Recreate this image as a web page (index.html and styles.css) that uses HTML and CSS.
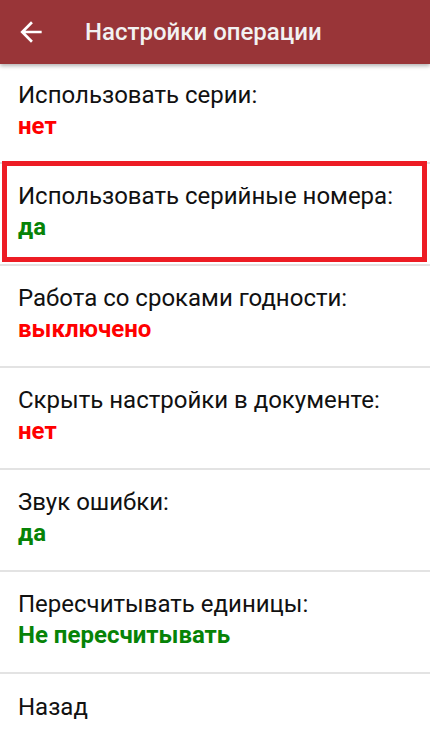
FILE: index.html
```html
<!DOCTYPE html>
<html lang="ru">
<head>
<meta charset="utf-8">
<title>Настройки операции</title>
<link rel="stylesheet" href="styles.css">
</head>
<body>
<header class="toolbar">
  <svg class="back" viewBox="0 0 24 24" width="32" height="32"><path fill="#fff" d="M20 11H7.83l5.59-5.59L12 4l-8 8 8 8 1.41-1.41L7.83 13H20v-2z"/></svg>
  <h1 class="title">Настройки операции</h1>
</header>
<main class="list">
  <div class="item">
    <div class="label">Использовать серии:</div>
    <div class="value red">нет</div>
  </div>
  <div class="item highlighted">
    <div class="label">Использовать серийные номера:</div>
    <div class="value green">да</div>
  </div>
  <div class="item">
    <div class="label">Работа со сроками годности:</div>
    <div class="value red">выключено</div>
  </div>
  <div class="item">
    <div class="label">Скрыть настройки в документе:</div>
    <div class="value red">нет</div>
  </div>
  <div class="item">
    <div class="label">Звук ошибки:</div>
    <div class="value green">да</div>
  </div>
  <div class="item">
    <div class="label">Пересчитывать единицы:</div>
    <div class="value green">Не пересчитывать</div>
  </div>
  <div class="item last">
    <div class="label">Назад</div>
  </div>
</main>
</body>
</html>
```
FILE: styles.css
```css
html, body {
  margin: 0;
  padding: 0;
  background: #fff;
}
body {
  font-family: Roboto, "Noto Sans", sans-serif;
  width: 430px;
  height: 738px;
  overflow: hidden;
}
.toolbar {
  position: relative;
  z-index: 2;
  height: 64px;
  background: #993538;
  display: flex;
  align-items: center;
  box-shadow: 0 2px 4px rgba(0,0,0,0.3);
}
.back {
  margin-left: 15px;
  flex: none;
}
.title {
  margin: 0 0 0 38px;
  color: #f2f2f2;
  font-size: 24px;
  font-weight: 500;
  letter-spacing: 0;
}
.list {
  display: flex;
  flex-direction: column;
}
.item {
  position: relative;
  height: 102px;
  box-sizing: border-box;
  padding: 17px 18px 0;
  border-bottom: 2px solid #e3e3e3;
  font-size: 24px;
  line-height: 31px;
  color: #111;
}
.item:first-child {
  height: 100px;
  padding-top: 16px;
}
.item.last {
  height: 64px;
  border-bottom: none;
  padding-top: 18px;
}
.highlighted::after {
  content: "";
  position: absolute;
  left: 2px;
  right: 3px;
  top: -3px;
  bottom: 2px;
  border: 5px solid #ed1c24;
  pointer-events: none;
}
.value {
  font-weight: 700;
}
.red { color: #ff0000; }
.green { color: #078307; }
```
